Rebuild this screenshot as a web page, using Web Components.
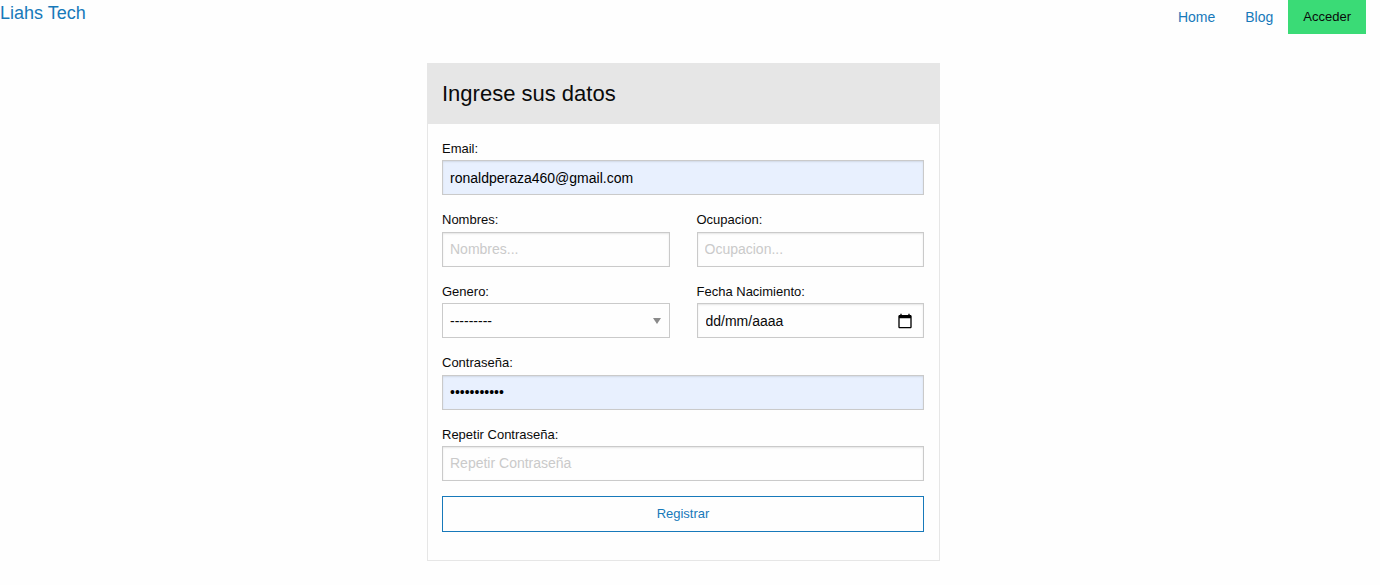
<!DOCTYPE html>
<html lang="es">
<head>
<meta charset="utf-8">
<meta name="viewport" content="width=device-width, initial-scale=1">
<title>Liahs Tech</title>
<style>
  body {
    margin: 0;
    background: #fefefe;
    color: #0a0a0a;
    font-family: "Liberation Sans", Arial, sans-serif;
    font-size: 14px;
    --primary: #1779ba;
    --success: #3adb76;
    --line: #cacaca;
    --panel: #e6e6e6;
    --autofill: #e8f0fe;
  }
</style>
</head>
<body>
<site-header>
  <menu-link slot="menu" href="#home">Home</menu-link>
  <menu-link slot="menu" href="#blog">Blog</menu-link>
  <login-button slot="menu">Acceder</login-button>
</site-header>
<page-main>
  <form-card heading="Ingrese sus datos">
    <form-field wide label="Email:" type="email" value="ronaldperaza460@gmail.com" filled></form-field>
    <form-field label="Nombres:" placeholder="Nombres..."></form-field>
    <form-field label="Ocupacion:" placeholder="Ocupacion..."></form-field>
    <select-field label="Genero:" options="---------,Masculino,Femenino"></select-field>
    <date-field label="Fecha Nacimiento:" placeholder="dd/mm/aaaa"></date-field>
    <form-field wide label="Contraseña:" type="password" value="contraseña1" filled></form-field>
    <form-field wide label="Repetir Contraseña:" type="password" placeholder="Repetir Contraseña"></form-field>
    <submit-button slot="actions">Registrar</submit-button>
  </form-card>
</page-main>
<script>
  class BaseElement extends HTMLElement {
    connectedCallback() {
      if (this.shadowRoot) return;
      this.attachShadow({ mode: 'open' }).innerHTML = this.render();
    }
    attr(name) { return this.getAttribute(name) || ''; }
  }

  customElements.define('site-header', class extends BaseElement {
    render() {
      return `<style>
        :host { display: block; }
        header { display: flex; justify-content: space-between; align-items: flex-start; padding-right: 14px; }
        .brand { color: var(--primary); font-size: 18px; line-height: 26px; text-decoration: none; }
        nav { display: flex; align-items: center; }
      </style>
      <header><a class="brand" href="#">Liahs Tech</a><nav><slot name="menu"></slot></nav></header>`;
    }
  });

  customElements.define('menu-link', class extends BaseElement {
    render() {
      return `<style>
        :host { display: block; }
        a { display: block; padding: 0 15px; line-height: 34px; color: var(--primary); text-decoration: none; }
      </style>
      <a href="${this.attr('href')}"><slot></slot></a>`;
    }
  });

  customElements.define('login-button', class extends BaseElement {
    render() {
      return `<style>
        :host { display: block; }
        button { display: block; padding: 0 15px; border: 0; background: var(--success); color: #0a0a0a;
          font-family: inherit; font-size: 13px; line-height: 34px; cursor: pointer; }
      </style>
      <button type="button"><slot></slot></button>`;
    }
  });

  customElements.define('page-main', class extends BaseElement {
    render() {
      return `<style>
        :host { display: block; }
        main { display: flex; justify-content: center; padding: 29px 13px 24px 0; }
      </style>
      <main><slot></slot></main>`;
    }
  });

  customElements.define('form-card', class extends BaseElement {
    render() {
      return `<style>
        :host { display: block; width: 100%; max-width: 513px; }
        section { border: 1px solid var(--panel); }
        h1 { margin: 0; padding: 14px; background: var(--panel); font-size: 22px; font-weight: 400; line-height: 32px; }
        form { padding: 13px 15px 28px 14px; }
        .fields { display: grid; grid-template-columns: 1fr 1fr; gap: 13px 27px; margin-bottom: 15px; }
        ::slotted([wide]) { grid-column: 1 / -1; }
      </style>
      <section>
        <h1>${this.attr('heading')}</h1>
        <form>
          <div class="fields"><slot></slot></div>
          <slot name="actions"></slot>
        </form>
      </section>`;
    }
  });

  const fieldStyle = `
    :host { display: block; min-width: 0; }
    label { display: block; font-size: 13px; line-height: 1.8; }
    input, select { display: block; box-sizing: border-box; width: 100%; height: 35px; margin: 0; padding: 0 7px;
      border: 1px solid var(--line); border-radius: 0; background: #fefefe; color: #0a0a0a;
      font-family: inherit; font-size: 14px; }
    input { box-shadow: inset 0 1px 2px rgba(10, 10, 10, .1); }
    input::placeholder { color: var(--line); opacity: 1; }
    .box { display: grid; align-items: center; }
    .box > * { grid-area: 1 / 1; }
    svg { display: block; }
  `;

  customElements.define('form-field', class extends BaseElement {
    render() {
      return `<style>${fieldStyle}
        :host([filled]) input { background: var(--autofill); color: #000; }
      </style>
      <label for="control">${this.attr('label')}</label>
      <input id="control" type="${this.attr('type') || 'text'}" value="${this.attr('value')}" placeholder="${this.attr('placeholder')}">`;
    }
  });

  customElements.define('date-field', class extends BaseElement {
    render() {
      return `<style>${fieldStyle}
        input { padding: 0 8px; }
        input::placeholder { color: #0a0a0a; }
        button { justify-self: end; margin: 0 11px 0 0; padding: 0; border: 0; background: none; color: #000; cursor: pointer; }
      </style>
      <label for="control">${this.attr('label')}</label>
      <div class="box">
        <input id="control" type="text" inputmode="numeric" placeholder="${this.attr('placeholder')}">
        <button type="button" aria-label="Abrir calendario">
          <svg width="16" height="16" viewBox="0 0 24 24" fill="currentColor" aria-hidden="true"><path d="M20 3h-1V1h-2v2H7V1H5v2H4c-1.100 0-2 .9-2 2v16c0 1.100.9 2 2 2h16c1.100 0 2-.9 2-2V5c0-1.100-.9-2-2-2zm0 18H4V8h16v13z"/></svg>
        </button>
      </div>`;
    }
  });

  customElements.define('select-field', class extends BaseElement {
    render() {
      const options = this.attr('options').split(',').map(o => `<option>${o}</option>`).join('');
      return `<style>${fieldStyle}
        select { appearance: none; }
        svg { justify-self: end; margin-right: 9px; pointer-events: none; }
      </style>
      <label for="control">${this.attr('label')}</label>
      <div class="box">
        <select id="control">${options}</select>
        <svg width="8" height="6" viewBox="0 0 8 6" aria-hidden="true"><path d="M0 0h8L4 6z" fill="#8a8a8a"/></svg>
      </div>`;
    }
  });

  customElements.define('submit-button', class extends BaseElement {
    render() {
      return `<style>
        :host { display: block; }
        button { display: block; width: 100%; height: 36px; padding: 0; border: 1px solid var(--primary);
          background: transparent; color: var(--primary); font-family: inherit; font-size: 13px; cursor: pointer; }
      </style>
      <button type="submit"><slot></slot></button>`;
    }
  });
</script>
</body>
</html>
